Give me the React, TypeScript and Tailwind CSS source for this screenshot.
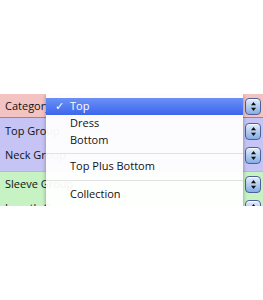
const Stepper = () => (
  <div className="w-[16px] h-[17px] rounded-[4px] border border-[#4e5f98] bg-gradient-to-b from-[#e4eefb] via-[#b3cdf0] to-[#86aee6] flex items-center justify-center shadow-[inset_0_1px_0_rgba(255,255,255,0.8)]">
    <svg width="7" height="11" viewBox="0 0 7 11">
      <path d="M3.5 1 L6 4.2 L1 4.2 Z" fill="#111" />
      <path d="M3.5 10 L6 6.8 L1 6.8 Z" fill="#111" />
    </svg>
  </div>
);

const Row = ({ label }: { label: string }) => (
  <div className="h-[24px] flex items-center justify-between pl-[5px] pr-[2px]">
    <span className="whitespace-nowrap">{label}</span>
    <Stepper />
  </div>
);

const MenuItem = ({ label, selected }: { label: string; selected?: boolean }) => (
  <div
    className={
      selected
        ? "h-[17px] flex items-center bg-gradient-to-b from-[#6c90f6] to-[#3c66ec] text-white"
        : "h-[17px] flex items-center text-[#111]"
    }
  >
    <span className="w-[24px] pl-[9px] text-[11px]">{selected ? "✓" : ""}</span>
    <span>{label}</span>
  </div>
);

const Separator = ({ h }: { h: string }) => (
  <div className={`${h} flex items-center`}>
    <div className="w-full h-px bg-[#e2e2e2]" />
  </div>
);

export default function App() {
  return (
    <div className="w-[263px] h-[300px] bg-white pt-[94px] font-['Open_Sans',sans-serif] text-[11px] text-[#111]">
      <div className="relative h-[112px] overflow-hidden">
        <div className="bg-[#f3c3c2] h-[24px] border-b border-[#8c8c8c]">
          <Row label="Category" />
        </div>
        <div className="bg-[#c6c4f4] pt-[1px] pb-[4px] border-b border-[#b8b8c8]">
          <Row label="Top Group" />
          <Row label="Neck Group" />
        </div>
        <div className="bg-[#c6f2c4]">
          <Row label="Sleeve Group" />
          <Row label="Length Group" />
        </div>

        <div className="absolute left-[46px] top-0 w-[197px] h-[114px] bg-white/95 pt-[4px] shadow-[0_1px_4px_rgba(0,0,0,0.35)]">
          <MenuItem label="Top" selected />
          <MenuItem label="Dress" />
          <MenuItem label="Bottom" />
          <Separator h="h-[9px]" />
          <MenuItem label="Top Plus Bottom" />
          <Separator h="h-[11px]" />
          <MenuItem label="Collection" />
        </div>
      </div>
    </div>
  );
}
